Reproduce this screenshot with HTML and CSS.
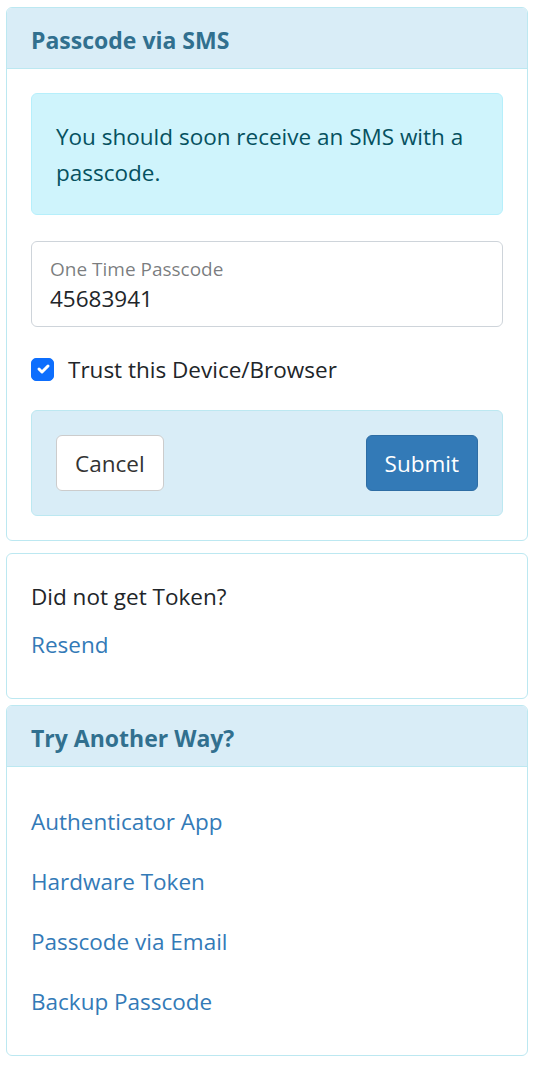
FILE: index.html
```html
<!DOCTYPE html>
<html lang="en">
<head>
<meta charset="utf-8">
<title>Passcode via SMS</title>
<link rel="stylesheet" href="styles.css">
</head>
<body>
<main class="page">
  <section class="card">
    <header class="card-header">Passcode via SMS</header>
    <div class="card-body">
      <div class="alert">You should soon receive an SMS with a passcode.</div>
      <label class="field">
        <span class="field-label">One Time Passcode</span>
        <input class="field-input" type="text" value="45683941">
      </label>
      <label class="check">
        <span class="check-box">
          <svg viewBox="0 0 20 20" width="20" height="20"><path d="M6 10l3 3l6-6" fill="none" stroke="#fff" stroke-width="3" stroke-linecap="round" stroke-linejoin="round"/></svg>
        </span>
        <span class="check-text">Trust this Device/Browser</span>
      </label>
      <div class="actions">
        <button class="btn btn-default" type="button">Cancel</button>
        <button class="btn btn-primary" type="button">Submit</button>
      </div>
    </div>
  </section>

  <section class="card card-resend">
    <div class="card-body">
      <p class="text">Did not get Token?</p>
      <p class="text"><a class="link" href="#">Resend</a></p>
    </div>
  </section>

  <section class="card card-other">
    <header class="card-header">Try Another Way?</header>
    <div class="card-body">
      <a class="method" href="#">Authenticator App</a>
      <a class="method" href="#">Hardware Token</a>
      <a class="method" href="#">Passcode via Email</a>
      <a class="method" href="#">Backup Passcode</a>
    </div>
  </section>
</main>
</body>
</html>
```

FILE: styles.css
```css
* { box-sizing: border-box; }

html, body {
  margin: 0;
  padding: 0;
  background: #fff;
}

body {
  font-family: "Open Sans", "Noto Sans", "Liberation Sans", sans-serif;
  font-size: 22.5px;
  line-height: 36px;
  color: #212529;
}

.page {
  padding: 7px 9px 0 6px;
}

.card {
  border: 1px solid #bce8f1;
  border-radius: 6px;
  background: #fff;
  overflow: hidden;
}

.card-resend { margin-top: 12px; }
.card-other { margin-top: 6px; }

.card-header {
  background: #d9edf7;
  border-bottom: 1px solid #bce8f1;
  color: #31708f;
  font-size: 23px;
  font-weight: 700;
  padding: 14px 24px 10px;
  line-height: 36px;
}

.card-body {
  padding: 24px;
}

.alert {
  background: #cff4fc;
  border: 1px solid #b6effb;
  color: #055160;
  border-radius: 6px;
  padding: 25px 24px 23px;
  margin-bottom: 26px;
}

.field {
  display: flex;
  flex-direction: column;
  border: 1px solid #ced4da;
  border-radius: 6px;
  padding: 15px 18px 9px;
  margin-bottom: 24px;
}

.field-label {
  font-size: 19px;
  line-height: 24px;
  color: rgba(33, 37, 41, 0.6);
}

.field-input {
  border: 0;
  outline: 0;
  padding: 0;
  margin: 0;
  font: inherit;
  line-height: 36px;
  height: 36px;
  color: #212529;
  background: transparent;
}

.check {
  display: flex;
  align-items: center;
  gap: 14px;
  margin-bottom: 23px;
  height: 36px;
}

.check-box {
  width: 23px;
  height: 23px;
  border-radius: 5px;
  background: #0d6efd;
  border: 1px solid #0d6efd;
  display: flex;
  align-items: center;
  justify-content: center;
}

.check-text {
  padding-top: 2px;
}

.actions {
  background: #d9edf7;
  border: 1px solid #bce8f1;
  border-radius: 6px;
  padding: 24px;
  display: flex;
  justify-content: space-between;
}

.btn {
  font: inherit;
  line-height: 36px;
  padding: 10px 18px 8px;
  border-radius: 6px;
  border: 1px solid;
}

.btn-default {
  background: #fff;
  border-color: #ccc;
  color: #333;
}

.btn-primary {
  background: #337ab7;
  border-color: #2e6da4;
  color: #fff;
}

.text {
  margin: 0 0 12px;
  padding-top: 1px;
  height: 36px;
}

.link, .method {
  color: #337ab7;
  text-decoration: none;
}

.method {
  display: block;
  padding: 13px 0 11px;
}
```
